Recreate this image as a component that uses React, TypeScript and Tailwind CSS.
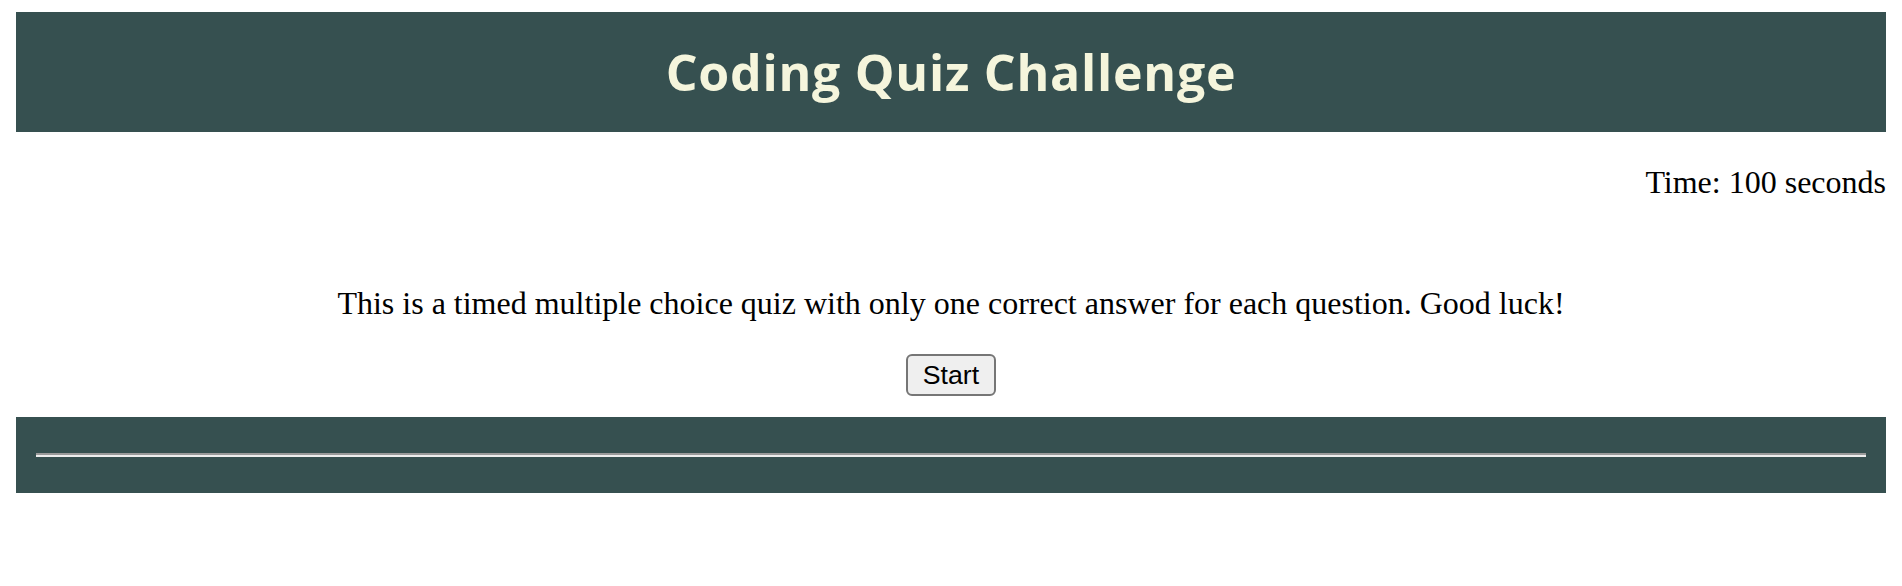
export default function App() {
  return (
    <div className="px-4 pt-3 bg-white min-h-[586px]">
      <header className="h-[120px] bg-[#365050] flex items-center justify-center">
        <h1
          className="text-[50px] font-bold text-[#f5f5dc] tracking-[0.75px]"
          style={{ fontFamily: '"Open Sans", "DejaVu Sans", sans-serif' }}
        >
          Coding Quiz Challenge
        </h1>
      </header>

      <main className="text-black" style={{ fontFamily: '"Liberation Serif", "Times New Roman", serif' }}>
        <p className="text-right text-[32px] leading-[37px] mt-8">Time: 100 seconds</p>

        <section className="flex flex-col items-center mt-[84px]">
          <p className="text-[32px] leading-[37px]">
            This is a timed multiple choice quiz with only one correct answer for each question. Good luck!
          </p>
          <button
            type="button"
            className="mt-8 h-[42px] px-[15px] bg-[#efefef] border-2 border-[#767676] rounded-[6px] text-[26.67px] leading-none text-black"
            style={{ fontFamily: '"Liberation Sans", Arial, sans-serif' }}
          >
            Start
          </button>
        </section>
      </main>

      <footer className="mt-[21px] h-[76px] bg-[#365050] flex items-center px-5">
        <hr className="w-full border-0 border-t-2 border-b-2 border-t-[#9a9a9a] border-b-[#eeeeee]" />
      </footer>
    </div>
  );
}
